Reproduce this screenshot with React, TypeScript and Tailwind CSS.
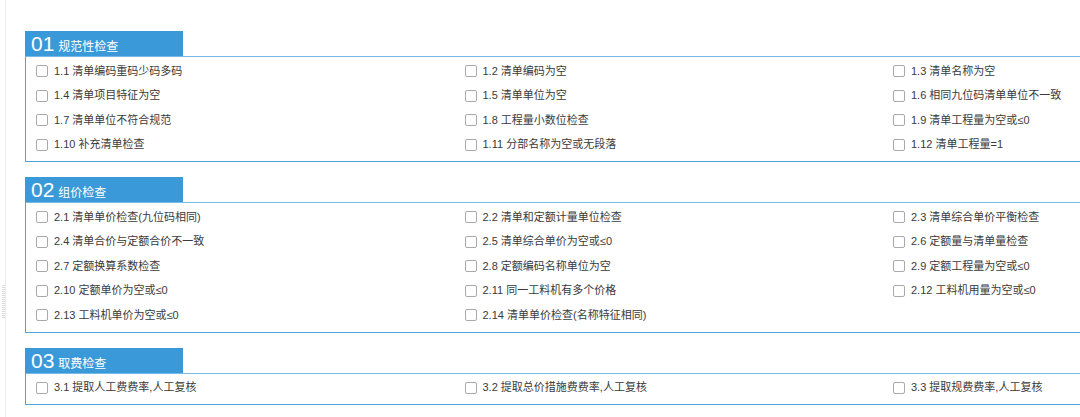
import React from 'react'

type Section = {
  no: string
  title: string
  items: string[]
}

const sections: Section[] = [
  {
    no: '01',
    title: '规范性检查',
    items: [
      '1.1 清单编码重码少码多码',
      '1.2 清单编码为空',
      '1.3 清单名称为空',
      '1.4 清单项目特征为空',
      '1.5 清单单位为空',
      '1.6 相同九位码清单单位不一致',
      '1.7 清单单位不符合规范',
      '1.8 工程量小数位检查',
      '1.9 清单工程量为空或≤0',
      '1.10 补充清单检查',
      '1.11 分部名称为空或无段落',
      '1.12 清单工程量=1',
    ],
  },
  {
    no: '02',
    title: '组价检查',
    items: [
      '2.1 清单单价检查(九位码相同)',
      '2.2 清单和定额计量单位检查',
      '2.3 清单综合单价平衡检查',
      '2.4 清单合价与定额合价不一致',
      '2.5 清单综合单价为空或≤0',
      '2.6 定额量与清单量检查',
      '2.7 定额换算系数检查',
      '2.8 定额编码名称单位为空',
      '2.9 定额工程量为空或≤0',
      '2.10 定额单价为空或≤0',
      '2.11 同一工料机有多个价格',
      '2.12 工料机用量为空或≤0',
      '2.13 工料机单价为空或≤0',
      '2.14 清单单价检查(名称特征相同)',
    ],
  },
  {
    no: '03',
    title: '取费检查',
    items: ['3.1 提取人工费费率,人工复核', '3.2 提取总价措施费费率,人工复核', '3.3 提取规费费率,人工复核'],
  },
]

function CheckItem({ label }: { label: string }) {
  return (
    <label className="flex items-center h-[24.5px] cursor-pointer">
      <span className="w-[12px] h-[12px] border border-[#a9a9a9] rounded-[2px] bg-white shrink-0" />
      <span className="ml-[6px] text-[11px] text-[#3a3a3a] whitespace-nowrap leading-none">{label}</span>
    </label>
  )
}

function CheckSection({ section }: { section: Section }) {
  return (
    <div>
      {/* tab header */}
      <div className="w-[158px] h-[25px] bg-[#3a9ad9] text-white flex items-end pl-[6px] pb-[2px]">
        <span className="text-[21px] leading-none font-light">{section.no}</span>
        <span className="text-[12px] leading-none ml-[4px] mb-[1px]">{section.title}</span>
      </div>
      {/* panel */}
      <div className="w-[1320px] border border-[#4fa3de] border-t-[#79b9e8] pt-[2px] pb-[4px] pl-[10px]">
        <div className="grid grid-cols-[428.5px_428.5px_428.5px]">
          {section.items.map(item => (
            <CheckItem key={item} label={item} />
          ))}
        </div>
      </div>
    </div>
  )
}

export default function App() {
  return (
    <div
      className="w-[1080px] h-[417px] overflow-hidden bg-white relative"
      style={{ fontFamily: '"Liberation Sans", "Noto Sans CJK SC", sans-serif' }}
    >
      {/* resize grip */}
      <div className="absolute left-[2px] top-[285px] w-[3px] h-[33px] bg-[repeating-linear-gradient(to_bottom,#d6dbe0_0px,#d6dbe0_1px,transparent_1px,transparent_2px)]" />
      <div className="ml-[5px] h-full border-l border-[#ececec] pl-[19px] pt-[31px] flex flex-col gap-[15px]">
        {sections.map(s => (
          <CheckSection key={s.no} section={s} />
        ))}
      </div>
    </div>
  )
}
